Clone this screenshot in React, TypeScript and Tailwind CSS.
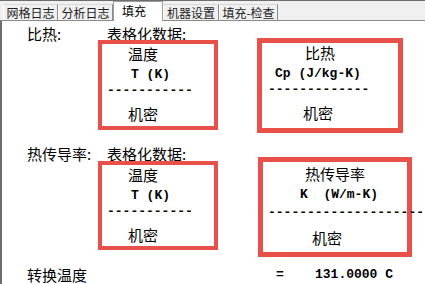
import React from 'react'

const cjk = "font-['Noto_Sans_CJK_SC','Noto_Sans',sans-serif]"
const mono = "font-['Liberation_Mono',monospace] font-bold text-[13px] leading-[16px] whitespace-pre"

function Tab({ label, w, active }: { label: string; w: string; active?: boolean }) {
  if (active) {
    return (
      <div className={`${w} h-[20px] -mb-px relative z-10 bg-white border border-b-0 border-[#9c9c9c] flex items-start pt-[1px] pl-[8px] text-[12px] leading-[16px] text-black`}>
        {label}
      </div>
    )
  }
  return (
    <div className={`${w} h-[16px] bg-[#f0f0f0] border border-b-0 border-l-white border-t-[#d8d8d8] border-r-[#8c8c8c] flex items-center justify-center text-[12px] leading-[16px] text-[#222]`}>
      {label}
    </div>
  )
}

function Box({
  className,
  title,
  unit,
  dashes,
  pads,
}: {
  className: string
  title: string
  unit: string
  dashes: string
  pads: [string, string, string, string]
}) {
  return (
    <div className={`border-[#e9504a] bg-white overflow-visible ${className}`}>
      <div className={`${pads[0]} h-[23px] text-[15px] leading-[20px]`}>{title}</div>
      <div className={`${pads[1]} ${mono}`}>{unit}</div>
      <div className={`${pads[2]} ${mono} h-[21px]`}>{dashes}</div>
      <div className={`${pads[3]} h-[20px] text-[15px] leading-[20px]`}>机密</div>
    </div>
  )
}

export default function App() {
  return (
    <div className={`w-[425px] h-[284px] bg-white overflow-hidden text-black ${cjk}`}>
      <div className="h-[21px] bg-[#f0f0f0] border-t border-b border-t-[#6e6e6e] border-b-[#8a8a8a] flex items-end pl-[3px]">
        <Tab label="网格日志" w="w-[55px]" />
        <Tab label="分析日志" w="w-[55px]" />
        <Tab label="填充" w="w-[50px]" active />
        <Tab label="机器设置" w="w-[56px]" />
        <Tab label="填充-检查" w="w-[59px]" />
      </div>

      <div className="h-[263px] border-l-2 border-[#6d6d6d] pl-[25px] pt-[3px]">
        <div className="flex h-[14px] text-[15px] leading-[20px]">
          <div className="w-[80px]">比热:</div>
          <div>表格化数据:</div>
        </div>
        <div className="flex items-start pl-[71px]">
          <Box
            className="w-[120px] h-[90px] mt-[2px] border-4"
            title="温度"
            unit="T (K)"
            dashes="-----------"
            pads={['pl-[26px]', 'pl-[29px]', 'pl-[5px]', 'pl-[26px]']}
          />
          <Box
            className="w-[146px] h-[95px] ml-[39px] border-[5px]"
            title="比热"
            unit="Cp (J/kg-K)"
            dashes="-------------"
            pads={['pl-[43px]', 'pl-[13px]', 'pl-[6px]', 'pl-[41px]']}
          />
        </div>

        <div className="flex h-[13px] mt-[11px] text-[15px] leading-[20px]">
          <div className="w-[80px]">热传导率:</div>
          <div>表格化数据:</div>
        </div>
        <div className="flex items-start pl-[71px]">
          <Box
            className="w-[120px] h-[89px] mt-[4px] border-4"
            title="温度"
            unit="T (K)"
            dashes="-----------"
            pads={['pl-[26px]', 'pl-[29px]', 'pl-[5px]', 'pl-[26px]']}
          />
          <Box
            className="w-[154px] h-[100px] ml-[40px] border-[5px] pt-[2px]"
            title="热传导率"
            unit="K  (W/m-K)"
            dashes="--------------------"
            pads={['pl-[42px]', 'pl-[37px]', 'pl-[5px] mt-[2px]', 'pl-[49px] mt-[2px]']}
          />
        </div>

        <div className="flex items-center mt-[8px] h-[20px]">
          <div className="w-[249px] text-[15px] leading-[20px]">转换温度</div>
          <div className={mono}>{'=    131.0000 C'}</div>
        </div>
      </div>
    </div>
  )
}
